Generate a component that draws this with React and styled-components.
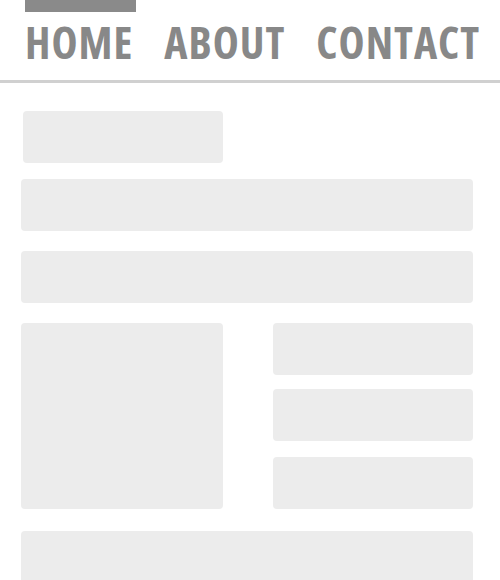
import styled, { createGlobalStyle } from "styled-components";

const GlobalStyle = createGlobalStyle`
    html, body {
        margin: 0;
        padding: 0;
        background: #ffffff;
        overflow: hidden;
    }
`

const navItems = [
    { label: "HOME", active: true },
    { label: "ABOUT" },
    { label: "CONTACT" },
];

const Page = styled.div`
    width: 500px;
    height: 580px;
    overflow: hidden;
`

const Nav = styled.nav`
    display: flex;
    align-items: flex-start;
    gap: 28px;
    height: 80px;
    padding-left: 25px;
    border-bottom: 3px solid #d0d0d0;
`

const NavItem = styled.a`
    display: block;
    box-sizing: border-box;
    border-top: 12px solid ${p => (p.$active ? "#8a8a8a" : "transparent")};
    padding: 8px 3px 0 0;
    font-family: "Open Sans", sans-serif;
    font-stretch: 75%;
    font-weight: bold;
    font-size: 44px;
    line-height: 44px;
    letter-spacing: 1px;
    color: #888888;
    text-decoration: none;
`

const Content = styled.main`
    display: flex;
    flex-direction: column;
    width: 452px;
    padding: 28px 0 0 21px;
`

const Block = styled.div`
    background-color: #ececec;
    border-radius: 4px;
    height: ${p => p.$h || 52}px;
    width: ${p => (p.$w ? `${p.$w}px` : "auto")};
    margin-top: ${p => p.$mt || 0}px;
    margin-left: ${p => p.$ml || 0}px;
`

const Split = styled.div`
    display: grid;
    grid-template-columns: 202px 200px;
    justify-content: space-between;
    margin-top: 20px;
`

const Stack = styled.div`
    display: flex;
    flex-direction: column;
    gap: 14px;

    & > :last-child {
        margin-top: 2px;
    }
`

export default function App() {
    return (
        <Page>
            <GlobalStyle />
            <Nav>
                {navItems.map(item => (
                    <NavItem key={item.label} href="#" $active={item.active}>
                        {item.label}
                    </NavItem>
                ))}
            </Nav>

            <Content>
                <Block $w={200} $ml={2} />
                <Block $mt={16} />
                <Block $mt={20} />
                <Split>
                    <Block $h={186} />
                    <Stack>
                        <Block />
                        <Block />
                        <Block />
                    </Stack>
                </Split>
                <Block $mt={22} $h={60} />
            </Content>
        </Page>
    );
}
